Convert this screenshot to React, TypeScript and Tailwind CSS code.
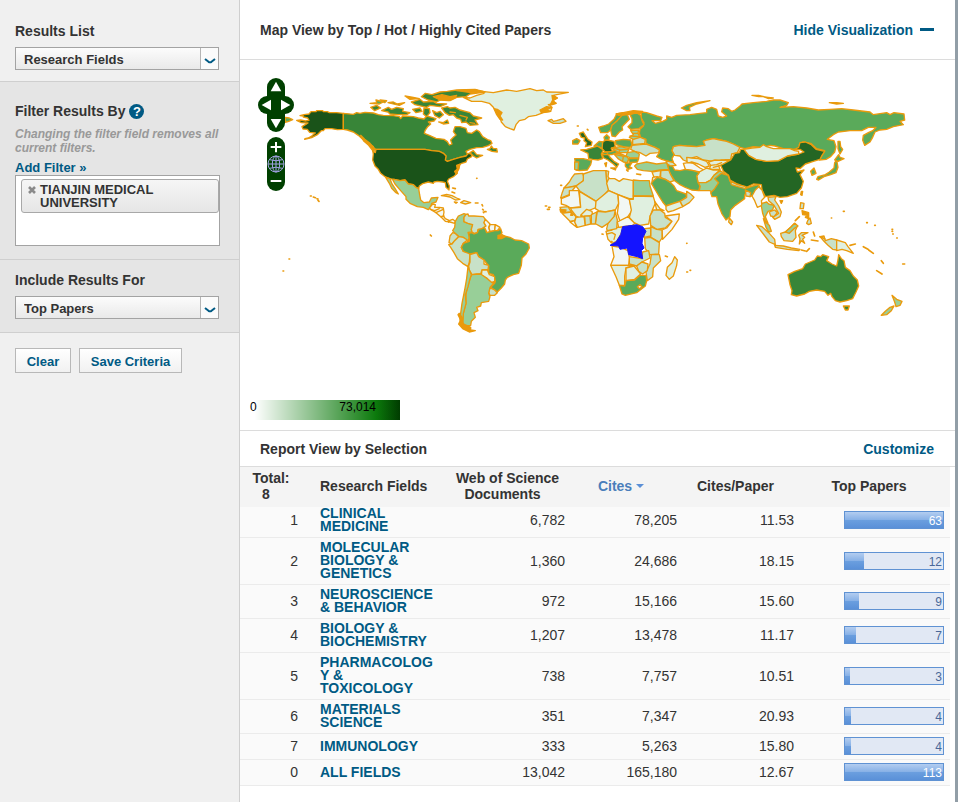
import type { ReactNode } from 'react';

const US = '#1a5319';
const DEEP = '#246624';
const DARK = '#388538';
const MID = '#5aaa5a';
const SOFT = '#98cf98';
const PALE = '#c8e1c8';
const FAINT = '#e0f0e0';
const NONE = '#f2f7f4';
const PICKED = '#1414ff';
const EDGE = '#ea9a0c';

type Shape = [fill: string, d: string];

// each block is drawn from its own origin
const blocks: { x: number; y: number; shapes: Shape[] }[] = [
  // Alaska
  {
    x: 0,
    y: 0,
    shapes: [
      [US, 'M310 160L290 158L268 158L262 155L250 155L248 152L230 152L228 155L213 155L207 162L192 164L180 167L190 168L190 171L203 174L207 181L196 183L182 180L170 181L184 188L204 189L196 194L186 200L189 207L202 208L209 217L226 219L215 228L205 234L195 236L194 238L215 233L232 224L244 212L250 212L255 206L275 206L292 209L310 208Z'],
      [MID, 'M136 172L148 174L158 179L146 184L136 187Z'],
    ],
  },
  // North America, Greenland
  {
    x: 360,
    y: 60,
    shapes: [
      [DARK, 'M-50 100L-20 103L-10 98L0 100L15 97L40 99L55 104L70 106L100 107L118 110L122 116L128 108L160 110L175 114L192 117L200 108L215 112L228 116L222 123L205 126L212 132L203 140L195 152L193 160L208 166L228 175L252 178L262 185L268 195L276 192L272 180L280 172L288 165L280 155L285 140L300 140L318 145L322 158L335 160L350 150L358 155L368 170L385 180L392 182L396 190L385 197L368 202L350 203L330 208L318 214L322 222L330 220L318 228L300 232L280 238L262 244L256 240L258 228L250 220L238 214L215 212L195 208L48 208L42 206L40 200L20 188L8 178L-5 166L-20 156L-38 150L-50 148Z'],
      [US, 'M48 208L195 208L215 212L238 214L250 220L258 228L256 240L262 244L280 238L300 232L318 228L325 220L334 222L335 230L322 237L318 246L305 250L297 256L296 266L290 270L292 280L280 290L266 297L262 304L268 318L267 330L258 322L256 308L248 306L232 304L222 306L220 310L205 306L188 311L178 318L176 326L168 322L160 314L145 312L135 300L120 302L102 298L88 296L75 290L62 280L55 268L45 258L38 240L40 222L38 212L46 218Z'],
      [SOFT, 'M98 299L102 298L120 302L135 300L145 312L160 314L168 322L176 326L179 345L182 360L192 368L208 366L214 354L234 352L228 366L215 370L212 382L205 389L190 382L172 380L150 370L138 358L138 350L122 332L105 312Z'],
      [SOFT, 'M77 292L90 296L96 312L105 325L115 342L108 338L95 325L88 310Z'],
      [FAINT, 'M310 52L330 54L350 46L372 40L365 34L400 38L440 30L470 34L510 26L530 32L550 30L560 36L625 37L590 44L580 46L592 54L578 62L588 70L565 74L576 82L572 94L550 98L528 106L505 110L495 118L478 122L468 134L462 150L450 146L436 140L424 126L420 112L410 96L400 82L388 70L365 64L335 64Z'],
      [EDGE, 'M402 86L412 88L426 98L420 108L428 120L420 118L410 104Z'],
      [EDGE, 'M540 90L560 80L575 82L560 90L572 94L544 98Z'],
      [EDGE, 'M576 46L592 54L578 62L588 70L570 76L578 60Z'],
      [PALE, 'M564 122L575 118L580 124L590 122L610 116L618 124L600 130L580 130Z'],
      [DARK, 'M65 92L85 82L95 88L110 82L130 86L128 94L150 98L140 104L112 104L90 102L84 96Z'],
      [DARK, 'M32 82L50 76L62 84L44 92Z'],
      [MID, 'M30 70L50 68L48 60L70 66L58 72Z'],
      [MID, 'M60 60L80 62L74 68Z'],
      [DARK, 'M84 68L100 66L112 72L134 68L118 76Z'],
      [EDGE, 'M135 48L160 52L178 56L150 58Z'],
      [DARK, 'M154 66L180 58L190 66L220 64L230 70L260 72L240 80L210 76L200 82L165 74Z'],
      [DARK, 'M184 50L196 40L216 44L240 36L262 34L290 30L345 28L375 36L330 42L318 50L290 52L270 62L244 58L230 66L204 60Z'],
      [EDGE, 'M220 50L246 44L270 50L290 46L284 54L266 62L240 60ZM290 32L345 30L372 36L334 38Z'],
      [DARK, 'M158 88L180 84L186 94L168 98ZM192 84L208 86L210 98L200 110L190 102Z'],
      [DARK, 'M245 84L262 80L270 84L285 82L300 90L330 98L340 108L365 114L345 120L354 134L330 136L318 126L305 128L302 118L290 114L280 104L268 106L255 98Z'],
      ['none', 'M270 96L286 98M300 106L322 112L318 120M330 128L344 130'],
      [DARK, 'M218 92L230 98L240 94L250 104L238 114L224 106Z'],
      [DARK, 'M236 126L250 128L262 120L266 130L250 132Z'],
      [DARK, 'M382 208L390 206L394 198L400 206L410 206L412 216L396 214Z'],
      [DARK, 'M330 218L340 212L350 224L368 226L350 234L340 228Z'],
      [EDGE, 'M2 166L12 184L26 196L40 214L46 208L30 190L14 178Z'],
      [EDGE, 'M290 256L300 252L296 268L288 282L284 274L292 268Z'],
    ],
  },
  // Central and South America
  {
    x: 480,
    y: 360,
    shapes: [
      [NONE, 'M88 84L98 72L106 74L104 82L118 82L130 84L132 96L130 108L136 116L148 122L158 118L166 124L164 130L150 126L136 124L124 112L108 98L94 90Z'],
      ['none', 'M92 88L104 92L118 86M108 98L130 88M122 110L132 108M146 121L146 127'],
      [FAINT, 'M124 47L140 43L156 47L170 54L180 58L166 60L150 51L135 48Z'],
      [FAINT, 'M182 68L192 62L200 64L212 68L196 72ZM163 66L172 67L168 70Z'],
      [SOFT, 'M166 124L175 108L192 101L198 103L192 112L192 125L204 130L218 134L214 148L216 156L204 157L208 172L204 186L190 172L178 170L165 160L158 152L164 142Z'],
      [PALE, 'M198 103L204 102L206 108L222 108L250 110L256 118L252 128L258 140L244 148L234 148L232 158L222 160L216 156L214 148L218 134L204 130L192 125L192 112Z'],
      [NONE, 'M256 118L270 132L266 142L270 156L260 158L256 148L252 142L258 138L252 128Z'],
      [NONE, 'M270 134L286 134L284 152L270 154L267 143Z'],
      [NONE, 'M286 134L300 142L292 152L284 152Z'],
      [PALE, 'M158 158L165 160L176 170L164 182L156 192L147 188L150 168Z'],
      [PALE, 'M156 192L164 182L176 170L190 172L202 180L190 190L184 202L190 214L204 216L210 224L208 246L204 260L188 250L172 236L162 218L152 202L146 194Z'],
      [MID, 'M206 160L216 158L222 162L232 158L236 148L246 146L252 142L256 148L260 158L284 152L294 152L302 146L306 158L296 174L312 168L330 172L345 180L365 182L386 192L388 204L378 222L366 234L364 256L356 280L340 284L322 292L316 300L314 312L304 324L292 336L284 330L272 322L284 310L286 304L280 284L266 280L266 258L252 240L236 230L230 218L210 222L190 214L184 202L190 190L208 184L208 172Z'],
      [EDGE, 'M294 166L306 164L316 170L304 176L294 176Z'],
      [PALE, 'M210 224L230 218L236 230L252 240L252 252L266 256L264 268L246 270L242 282L230 282L216 284L208 270L206 258L210 246Z'],
      [FAINT, 'M246 270L262 270L268 284L284 290L284 304L274 308L262 296L244 286Z'],
      [PALE, 'M270 324L284 330L292 338L284 346L270 346L266 338Z'],
      [SOFT, 'M216 284L242 282L262 296L276 308L284 306L270 322L266 340L270 350L266 364L244 368L242 378L230 382L234 392L222 398L226 412L214 424L212 436L196 438L188 428L190 400L198 370L198 340L206 310L212 290Z'],
      [SOFT, 'M204 260L208 270L214 284L210 296L204 320L196 345L198 370L190 400L188 428L194 440L186 436L180 420L182 400L186 370L194 330L200 295Z'],
      [EDGE, 'M178 400L186 412L188 432L200 436L212 442L212 450L226 452L208 456L188 446L176 432L182 420L174 404Z'],
    ],
  },
  // Europe, Russia, Middle East
  {
    x: 900,
    y: 60,
    shapes: [
      [MID, 'M304 96L320 98L350 108L366 112L362 122L336 122L346 130L368 124L380 118L380 108L395 112L410 106L450 104L480 100L500 98L500 88L515 82L530 88L535 108L548 112L560 108L545 95L548 84L565 86L575 94L585 90L600 78L606 72L640 68L680 64L700 60L720 60L745 68L740 76L720 82L760 80L800 84L835 90L870 88L905 86L940 90L990 96L1000 104L1040 98L1050 104L1062 98L1092 102L1094 120L1080 124L1090 134L1060 140L1040 148L1020 150L1005 156L998 172L990 186L974 196L968 180L970 166L985 158L998 152L1008 142L985 142L965 152L930 152L895 156L880 164L862 178L882 182L888 200L884 216L872 230L858 238L838 240L845 226L854 212L830 206L812 190L788 186L778 194L782 204L768 208L730 206L705 198L690 196L668 202L640 200L615 206L600 202L580 192L560 184L540 180L520 176L500 180L490 184L495 196L470 200L440 198L418 196L400 200L396 212L402 224L396 236L400 246L385 244L365 238L350 230L358 218L358 208L345 202L335 198L318 190L318 178L302 172L298 160L300 148L310 138L312 128L304 115Z'],
      [PALE, 'M396 212L400 200L418 196L440 198L470 200L495 196L490 184L500 180L520 176L540 180L560 184L580 192L600 202L592 218L575 222L572 238L545 240L525 246L505 242L490 240L470 230L455 234L440 244L430 240L420 228L404 226Z'],
      [FAINT, 'M440 232L455 234L475 236L500 244L508 258L495 262L475 252L455 246L442 250Z'],
      [NONE, 'M430 250L445 248L460 250L480 264L492 270L478 276L460 272L436 268Z'],
      [FAINT, 'M505 246L525 240L568 242L550 254L536 258L540 268L508 268L512 256Z'],
      ['none', 'M512 256L530 254L545 248M520 262L536 258'],
      [FAINT, 'M478 276L500 264L520 270L540 270L522 286L512 300L498 308L474 308L470 288Z'],
      [SOFT, 'M474 308L498 308L512 300L522 286L540 272L556 282L544 294L540 308L528 322L530 334L518 338L510 332L478 332L480 320Z'],
      [MID, 'M382 252L396 256L404 270L420 272L436 268L460 272L478 278L470 288L474 308L480 318L476 332L455 330L436 322L420 314L404 302L392 284L386 270Z'],
      [SOFT, 'M290 252L300 250L320 246L350 252L380 248L386 268L360 270L335 274L310 272L292 268L284 258Z'],
      [PALE, 'M378 242L400 248L408 256L392 258L382 252Z'],
      [PALE, 'M362 272L386 270L392 284L402 302L390 306L376 298L362 292Z'],
      [FAINT, 'M336 276L362 272L360 290L342 292Z'],
      [FAINT, 'M338 292L352 290L348 304L336 306Z'],
      [MID, 'M340 302L352 292L376 298L392 308L402 318L410 332L438 342L440 352L420 364L395 372L378 378L368 366L358 350L346 330L334 310Z'],
      [PALE, 'M440 334L452 342L462 352L448 368L428 380L420 364L440 352Z'],
      [FAINT, 'M378 378L395 372L420 364L428 380L400 392L384 396L378 388Z'],
      [PALE, 'M276 196L300 194L318 192L345 202L358 210L356 218L330 220L318 228L300 218L284 214L272 208Z'],
      [PALE, 'M278 178L296 170L316 178L314 190L278 194Z'],
      [SOFT, 'M272 152L296 150L294 160L300 172L280 178L268 172L280 164Z'],
      ['none', 'M278 160L294 160M270 168L296 170'],
      [MID, 'M226 182L250 178L272 180L276 196L270 202L250 200L228 194Z'],
      [DEEP, 'M190 184L200 180L222 184L226 200L214 206L218 216L196 216L186 206L184 192Z'],
      [MID, 'M162 198L178 184L188 186L186 206L176 200Z'],
      [DARK, 'M122 210L140 208L160 202L172 198L190 210L184 222L188 236L174 240L158 238L146 236L144 220Z'],
      [MID, 'M104 236L130 236L155 242L152 254L142 270L118 272L108 270L106 248Z'],
      [SOFT, 'M104 246L116 246L114 270L104 268Z'],
      [DEEP, 'M136 200L140 188L132 182L134 174L124 172L118 160L130 156L136 166L144 178L156 186L154 196Z'],
      [MID, 'M98 192L98 182L110 176L120 182L114 192Z'],
      [DARK, 'M186 224L204 222L210 232L222 244L236 252L230 262L220 252L204 240L192 234Z'],
      [DARK, 'M212 264L228 264L226 270ZM194 250L200 248L198 260Z'],
      [MID, 'M188 218L218 214L228 208L236 216L216 224L190 224Z'],
      [SOFT, 'M214 204L240 200L268 206L262 218L236 218Z'],
      ['none', 'M240 210L264 208M222 204L240 210L236 218M200 216L204 224'],
      [SOFT, 'M262 218L284 214L298 222L296 234L272 234L258 228Z'],
      [SOFT, 'M222 222L240 220L258 228L266 236L262 248L250 246L234 236Z'],
      ['none', 'M240 222L250 230L248 242M226 224L256 230'],
      [MID, 'M266 236L296 236L292 246L268 248Z'],
      [MID, 'M256 250L276 248L268 260L276 264L264 268L256 258Z'],
      [MID, 'M176 142L190 138L206 132L222 118L230 102L250 98L262 102L280 94L304 96L298 102L270 102L246 108L232 122L216 136L212 150L202 158L182 158Z'],
      [MID, 'M216 136L232 122L246 106L262 104L268 118L254 132L246 140L248 150L238 156L226 170L216 168L212 150Z'],
      [MID, 'M270 104L290 98L302 106L306 122L312 134L296 146L272 148L264 140L276 128L276 116Z'],
      [EDGE, 'M228 102L250 98L280 92L308 94L300 100L270 100L236 106Z'],
      [MID, 'M192 172L200 164L208 172L206 180L194 180Z'],
      [MID, 'M424 84L440 76L470 68L510 62L470 72L448 82L450 92L440 92Z'],
    ],
  },
  // Africa
  {
    x: 900,
    y: 300,
    shapes: [
      [PALE, 'M104 42L128 40L132 52L130 62L108 78L88 82L72 84L88 66L96 52Z'],
      [PALE, 'M130 42L160 32L198 32L200 62L206 90L190 108L168 124L120 94L108 78L130 62Z'],
      [PALE, 'M198 32L206 34L204 50L210 58L200 64Z'],
      [FAINT, 'M206 56L224 56L238 64L250 56L280 62L280 116L268 116L234 104L206 92L200 70Z'],
      [SOFT, 'M280 60L300 62L328 62L330 78L340 108L280 108Z'],
      [PALE, 'M72 84L108 78L98 90L88 104L62 114L66 100Z'],
      [NONE, 'M64 116L88 106L88 92L116 92L122 140L92 144L78 136L64 132Z'],
      [FAINT, 'M118 94L168 124L170 142L150 150L132 160L120 174L108 168L94 150L92 144L122 142Z'],
      [FAINT, 'M168 124L206 92L234 104L236 130L226 150L196 156L176 152L166 146Z'],
      [NONE, 'M234 104L268 118L276 152L262 172L240 184L232 160L236 130Z'],
      [FAINT, 'M280 108L340 110L346 130L338 148L330 170L326 192L300 196L282 188L268 172L274 150L268 118L280 118Z'],
      [FAINT, 'M344 124L360 146L372 152L350 150Z'],
      [PALE, 'M330 168L340 150L360 150L374 160L376 172L396 184L376 204L350 208L332 196Z'],
      [NONE, 'M376 168L418 162L416 178L396 208L368 238L366 210L380 204L396 184Z'],
      [PALE, 'M332 200L350 208L366 210L366 234L358 246L332 232Z'],
      [PALE, 'M314 206L332 204L332 228L312 232Z'],
      [PALE, 'M314 234L332 232L358 248L356 282L330 284L316 266Z'],
      [PALE, 'M358 284L362 302L340 324L338 350L322 362L318 336L330 312L334 284Z'],
      [PALE, 'M268 290L296 294L306 296L308 276L326 272L330 294L306 306L290 318L268 312Z'],
      [PALE, 'M290 318L306 306L324 312L322 332L308 342L296 334Z'],
      [NONE, 'M216 258L242 262L264 272L268 292L266 316L212 316L222 290Z'],
      [FAINT, 'M212 316L282 316L258 324L254 348L254 376L238 376L228 350Z'],
      [FAINT, 'M258 324L282 318L302 342L284 358L258 362Z'],
      [MID, 'M238 376L254 378L258 362L284 360L300 346L318 346L320 362L316 378L290 398L256 406L246 402Z'],
      [NONE, 'M292 380L300 374L306 380L298 386Z'],
      [FAINT, 'M214 248L204 238L198 214L216 210L222 200L232 202L248 200L244 220L230 244L216 250Z'],
      ['none', 'M200 222L216 218L226 224L222 238'],
      [PALE, 'M200 206L204 190L222 168L226 156L232 180L230 206L202 212Z'],
      [PALE, 'M166 190L172 154L196 156L226 150L222 170L204 190L186 202L168 192Z'],
      [NONE, 'M232 186L264 170L284 190L278 196L248 200L236 202Z'],
      [PALE, 'M60 142L84 140L94 156L66 158Z'],
      [FAINT, 'M66 160L94 156L108 170L104 182L90 184L78 172Z'],
      [NONE, 'M90 186L104 182L110 202Z'],
      [FAINT, 'M108 172L132 170L136 196L112 202L104 186Z'],
      [FAINT, 'M122 166L140 148L156 154L158 166L134 170Z'],
      [PALE, 'M134 168L150 168L152 192L136 196Z'],
      [PALE, 'M154 164L170 156L166 192L154 192Z'],
      [EDGE, 'M60 148L78 150L76 156L62 156ZM94 158L98 166L92 166Z'],
      [FAINT, 'M404 290L412 300L410 316L400 348L388 358L378 346L382 322L396 308Z'],
    ],
  },
  // East Asia, India
  {
    x: 1380,
    y: 60,
    shapes: [
      [DEEP, 'M62 256L92 240L104 220L118 218L122 208L132 208L146 226L168 238L200 244L236 242L262 228L296 222L312 216L300 208L280 210L296 202L300 188L316 186L334 194L348 208L374 214L366 226L360 238L340 244L316 252L300 266L288 264L292 276L312 270L300 284L310 304L304 324L290 340L262 350L240 352L222 346L196 350L186 330L184 314L160 312L140 322L112 312L90 300L86 286L70 274Z'],
      [FAINT, 'M132 208L156 204L180 202L190 194L200 200L220 206L250 206L270 206L284 212L296 214L296 222L262 228L236 242L200 244L168 238L146 226Z'],
      [MID, 'M332 274L342 264L348 280L336 286Z'],
      [MID, 'M350 298L354 290L376 284L388 276L402 264L404 248L410 240L414 262L408 278L392 284L372 290L356 300Z'],
      [MID, 'M404 240L416 224L420 232L432 236L414 244Z'],
      [MID, 'M414 184L420 184L422 200L428 208L420 222L414 206Z'],
      [MID, 'M302 344L304 334L308 334L306 346Z'],
      [MID, 'M156 46L176 46L192 50L176 50ZM190 50L204 52L220 54L206 56ZM388 68L410 68L430 70L410 72Z'],
      [MID, 'M44 296L64 280L84 286L90 304L116 316L140 324L158 318L176 314L180 324L164 336L158 346L150 350L140 334L134 346L134 356L106 376L92 390L90 410L78 420L66 402L54 372L50 350L36 350L32 338L44 326L56 308Z'],
      [PALE, 'M92 304L112 314L138 320L136 326L114 320L94 314Z'],
      [PALE, 'M136 330L152 338L150 350L138 348Z'],
      [NONE, 'M156 348L166 330L176 320L186 330L194 352L184 362L186 376L172 382L164 362Z'],
    ],
  },
  // South-East Asia, Oceania
  {
    x: 1380,
    y: 360,
    shapes: [
      [PALE, 'M88 114L98 126L94 134L86 126Z'],
      [SOFT, 'M186 70L200 66L206 72L222 76L218 90L204 94L196 110L204 130L196 124L188 100L184 78Z'],
      [PALE, 'M204 52L228 50L224 60L236 78L244 96L240 110L224 118L218 112L236 100L222 76L206 62Z'],
      [PALE, 'M208 96L224 90L232 98L222 110L212 108Z'],
      [SOFT, 'M190 116L200 130L208 136L214 154L206 156L198 142Z'],
      [PALE, 'M170 136L186 140L206 158L224 178L226 194L208 186L190 162Z'],
      [PALE, 'M224 196L250 198L274 204L300 208L296 212L262 208L226 202Z'],
      [PALE, 'M242 160L256 156L272 142L284 130L292 138L286 152L288 172L278 184L252 182L244 170Z'],
      [SOFT, 'M256 156L272 142L284 130L294 138L282 146L268 160Z'],
      [PALE, 'M296 166L304 158L324 158L306 166L314 172L308 178L314 190L304 182L298 192L300 176Z'],
      [PALE, 'M360 170L372 168L376 182L394 176L410 180L410 210L398 208L384 196L372 184Z'],
      [FAINT, 'M410 180L436 188L444 200L460 220L440 212L426 208L410 212Z'],
      [PALE, 'M300 86L302 68L312 70L310 86Z'],
      [PALE, 'M320 130L324 120L330 114L334 130L326 134Z'],
      [EDGE, 'M306 92L326 98L326 116L316 112L322 106L308 104Z'],
      [DARK, 'M240 62L248 62L244 70Z'],
      [DARK, 'M264 284L284 274L308 266L316 252L330 246L344 240L352 228L362 230L368 224L386 230L380 242L396 252L410 258L414 240L416 224L424 236L432 242L436 262L450 272L460 288L472 300L476 318L468 336L458 356L440 362L420 366L406 362L396 350L392 340L384 346L374 334L350 330L328 334L314 342L290 348L274 344L276 332L270 314Z'],
      [DARK, 'M430 378L448 378L444 390L436 390Z'],
      [SOFT, 'M576 346L590 358L606 364L600 376L588 380L584 366Z'],
      [SOFT, 'M582 378L574 392L560 404L544 406L556 394L570 382Z'],
    ],
  },
];

// islets too small to have a fill, on the full canvas
const islets =
  'M211 408l3 0M220 411l6 2M231 416l3 1M234 421l3 3' +
  'M147 597l2 0M129 633l2 0' +
  'M710 355l1 0M638 384l8 2M636 396l8 3M706 429l8 0M726 434l2 4M728 448l2 2M730 456l1 2M734 455l4 0M571 525l3 3' +
  'M916 438l4 0M926 442l4 0M922 448l6 0M962 376l3 0M1012 198l3 0M1042 208l2 2' +
  'M1276 588l6 2M1340 550l1 0M1340 636l3 0M1350 631l2 0M1086 522l3 1M1114 545l2 0' +
  'M1190 342l12 2M1160 330l4 3' +
  'M1666 482l12 -12M1684 570l12 3M1700 574l8 -8M1720 516l4 12M1714 540l20 3M1740 530l14 6' +
  'M1830 556l16 -4M1870 560l14 8M1886 570l14 10M1924 602l6 8M1910 632l16 10M1988 612l6 0' +
  'M1774 474l1 0M1810 454l3 0M1880 488l2 0M1904 496l2 0M1956 508l2 0M1956 514l2 0M1958 522l2 0M1970 534l2 0';

const congo =
  'M248 200L262 198L278 196L290 194L308 200L318 214L308 234L306 250L312 264L304 272L308 296L292 290L266 284L262 264L240 268L236 258L210 256L228 246L242 224Z';

const rows = [
  { rank: 1, field: 'CLINICAL MEDICINE', docs: '6,782', cites: '78,205', ratio: '11.53', top: 63 },
  { rank: 2, field: 'MOLECULAR BIOLOGY & GENETICS', docs: '1,360', cites: '24,686', ratio: '18.15', top: 12 },
  { rank: 3, field: 'NEUROSCIENCE & BEHAVIOR', docs: '972', cites: '15,166', ratio: '15.60', top: 9 },
  { rank: 4, field: 'BIOLOGY & BIOCHEMISTRY', docs: '1,207', cites: '13,478', ratio: '11.17', top: 7 },
  { rank: 5, field: 'PHARMACOLOGY & TOXICOLOGY', docs: '738', cites: '7,757', ratio: '10.51', top: 3 },
  { rank: 6, field: 'MATERIALS SCIENCE', docs: '351', cites: '7,347', ratio: '20.93', top: 4 },
  { rank: 7, field: 'IMMUNOLOGY', docs: '333', cites: '5,263', ratio: '15.80', top: 4 },
  { rank: 0, field: 'ALL FIELDS', docs: '13,042', cites: '165,180', ratio: '12.67', top: 113 },
];

function WorldMap() {
  return (
    <svg viewBox="0 0 2145 1110" className="block w-full h-auto" role="img" aria-label="World map">
      <g stroke={EDGE} strokeWidth="4" strokeLinejoin="round" strokeLinecap="round">
        {blocks.map((b, i) => (
          <g key={i} transform={`translate(${b.x} ${b.y})`}>
            {b.shapes.map(([fill, d], j) => (
              <path key={j} d={d} fill={fill} />
            ))}
          </g>
        ))}
        <path d={islets} fill="none" strokeWidth="5" />
      </g>
      <path d={congo} transform="translate(900 300)" fill={PICKED} stroke={PICKED} strokeWidth="3" />
    </svg>
  );
}

function MapButton({ label, className = '', children }: { label: string; className?: string; children: ReactNode }) {
  return (
    <button aria-label={label} className={`block w-[18px] h-[18px] bg-[#004000] ${className}`}>
      <svg viewBox="0 0 54 54" className="block w-full h-full" fill="white">
        {children}
      </svg>
    </button>
  );
}

function MapControls() {
  return (
    <div className="top-[18px] left-[18px] absolute flex flex-col items-center">
      <MapButton label="Pan up" className="rounded-t-full">
        <path d="M27 11L43 40H11Z" />
      </MapButton>
      <div className="flex">
        <MapButton label="Pan left" className="rounded-l-full">
          <path d="M11 27L39 11V43Z" />
        </MapButton>
        <MapButton label="Pan right" className="rounded-r-full">
          <path d="M43 27L15 11V43Z" />
        </MapButton>
      </div>
      <MapButton label="Pan down" className="rounded-b-full">
        <path d="M27 43L43 15H11Z" />
      </MapButton>
      <MapButton label="Zoom in" className="mt-[5px] rounded-t-full">
        <path d="M24 15h6v12h13v6H30v13h-6V33H11v-6h13Z" />
      </MapButton>
      <MapButton label="Zoom to world">
        <g fill="none" stroke="#a3a3e6" strokeWidth="3">
          <circle cx="27" cy="27" r="24" />
          <ellipse cx="27" cy="27" rx="11" ry="24" />
          <path d="M27 3v48M3 27h48M8 14q19 7 38 0M8 40q19-7 38 0" />
        </g>
      </MapButton>
      <MapButton label="Zoom out" className="rounded-b-full">
        <path d="M11 21h32v6H11Z" />
      </MapButton>
    </div>
  );
}

function Dropdown({ id, value }: { id: string; value: string }) {
  return (
    <div className="relative mt-[7px] w-[204px] h-[23px]">
      <select
        id={id}
        className="bg-linear-to-b from-[#fcfcfc] to-[#e9e9e9] px-2 pt-[3px] border border-[#a3a3a3] w-full h-full font-bold text-[13px] appearance-none"
      >
        <option>{value}</option>
      </select>
      <span className="top-px right-px absolute flex justify-center items-center bg-[#fbfbfb] border-[#b5b5b5] border-l w-[18px] h-[21px] pointer-events-none">
        <svg viewBox="0 0 12 6" className="mt-1 w-3 h-1.5" fill="none" stroke="#005a84" strokeWidth="2">
          <path d="M1 1L4.5 3.8Q6 4.8 7.5 3.8L11 1" />
        </svg>
      </span>
    </div>
  );
}

function PaperBar({ value }: { value: number }) {
  const percent = Math.min(100, (value / 63) * 100);
  return (
    <div className="relative bg-[#e1e8f4] ml-auto border border-[#5f92d3] w-[100px] h-[18px]">
      <div
        className="bg-[linear-gradient(to_bottom,#b3cdf0_0%,#86b0e6_50%,#6b9fdf_50%,#5a90d8_100%)] h-full"
        style={{ width: `${percent}%` }}
      />
      <span
        className={`absolute inset-y-0 right-px text-xs leading-[18px] ${percent === 100 ? 'text-white' : 'text-[#4a6899]'}`}
      >
        {value}
      </span>
    </div>
  );
}

export default function App() {
  return (
    <div className="flex bg-white border-[#929ea7] border-r-[3px] min-h-screen font-['Liberation_Sans',Arial,sans-serif] text-[#333] text-sm">
      {/* filters */}
      <aside className="bg-[#f0f0f0] border-[#cfcfcf] border-r w-60 shrink-0">
        <section className="px-[15px] pt-[22px] pb-[11px] border-[#cfcfcf] border-b">
          <label htmlFor="results-list" className="block font-bold leading-[18px]">
            Results List
          </label>
          <Dropdown id="results-list" value="Research Fields" />
        </section>

        <section className="bg-[#e5e5e5] px-[15px] pt-5 pb-[13px] border-[#cfcfcf] border-b">
          <div className="flex items-center gap-1">
            <h2 className="font-bold leading-[18px]">Filter Results By</h2>
            <button
              aria-label="Help"
              className="bg-[#005a84] rounded-full w-[15px] h-[15px] font-bold text-white text-[13px] leading-[15px]"
            >
              ?
            </button>
          </div>
          <p className="mt-[7px] font-bold text-[#999] text-xs italic leading-[14px]">
            Changing the filter field removes all current filters.
          </p>
          <a href="#" className="block pt-1 h-5 font-bold text-[#005a84] text-[13px] leading-[18px]">
            Add Filter »
          </a>
          <div className="bg-white pt-[3px] pl-[5px] border border-[#a3a3a3] w-[205px] h-[71px]">
            <div className="flex bg-linear-to-b from-[#f6f6f6] to-[#e6e6e6] py-[3px] pl-1.5 border border-[#a8a8a8] rounded-[3px]">
              <button aria-label="Remove filter" className="flex items-center w-3 h-[13px]">
                <svg viewBox="0 0 8 8" className="w-2 h-2" stroke="#8a8a8a" strokeWidth="2.6">
                  <path d="M1 1l6 6M7 1l-6 6" />
                </svg>
              </button>
              <span className="flex-1 font-bold text-[13px] leading-[13px]">TIANJIN MEDICAL UNIVERSITY</span>
            </div>
          </div>
        </section>

        <section className="bg-[#e5e5e5] px-[15px] pt-[11px] pb-[13px] border-[#cfcfcf] border-b">
          <label htmlFor="include-results" className="block font-bold leading-[18px]">
            Include Results For
          </label>
          <Dropdown id="include-results" value="Top Papers" />
        </section>

        <div className="flex gap-2 px-[15px] pt-[15px]">
          <button className="bg-linear-to-b from-white to-[#f1f1f1] pt-[3px] border border-[#b8b8b8] w-14 h-[25px] font-bold text-[#005a84] text-[13px]">
            Clear
          </button>
          <button className="bg-linear-to-b from-white to-[#f1f1f1] pt-[3px] border border-[#b8b8b8] w-[103px] h-[25px] font-bold text-[#005a84] text-[13px]">
            Save Criteria
          </button>
        </div>
      </aside>

      <main className="flex-1 min-w-0">
        <div className="flex justify-between items-center pr-[21px] pl-5 border-[#dcdcdc] border-b h-[60px] font-bold">
          <h1>Map View by Top / Hot / Highly Cited Papers</h1>
          <button className="flex items-center gap-[7px] text-[#005a84]">
            Hide Visualization
            <span className="bg-[#005a84] w-3.5 h-[3px]" />
          </button>
        </div>

        {/* map */}
        <div className="relative">
          <WorldMap />
          <MapControls />
          <div className="bottom-2.5 left-2.5 absolute flex justify-between bg-[linear-gradient(to_right,#fff_3%,#0c7a0c_84%,#003c00_100%)] pr-6 w-[150px] h-5 text-black text-xs leading-[14px]">
            <span>0</span>
            <span>73,014</span>
          </div>
        </div>

        {/* report */}
        <div className="flex justify-between items-center pr-[21px] pl-5 border-[#dcdcdc] border-t border-b h-[37px] font-bold">
          <h2>Report View by Selection</h2>
          <a href="#" className="text-[#005a84]">
            Customize
          </a>
        </div>
        <div className="pr-[5px]">
          <table className="w-full border-collapse table-fixed">
            <thead>
              <tr className="bg-[#f4f4f4] *:pb-0.5 h-10 leading-4">
                <th className="w-[62px]">
                  Total:
                  <span className="block pr-2.5">8</span>
                </th>
                <th className="pl-[18px] w-[148px] text-left">Research Fields</th>
                <th className="w-[115px]">
                  Web of Science
                  <span className="block pr-2.5">Documents</span>
                </th>
                <th className="w-[112px]">
                  <button className="inline-flex items-center gap-1 text-[#4a7ebb]">
                    Cites
                    <svg viewBox="0 0 8 4" className="w-2 h-1" fill="#5b8fd6">
                      <path d="M0 0h8L4 4Z" />
                    </svg>
                  </button>
                </th>
                <th className="w-[117px]">Cites/Paper</th>
                <th className="pr-1.5 w-[156px]">Top Papers</th>
              </tr>
            </thead>
            <tbody>
              {rows.map((row) => (
                <tr
                  key={row.rank}
                  className="bg-[#fafafa] *:pt-[3px] first:*:pt-0 *:pb-1 border-[#ebebeb] border-b text-right leading-4"
                >
                  <td className="pr-1">{row.rank}</td>
                  <td className="pr-[15px] pl-[18px] text-left leading-[13px]">
                    <a href="#" className="block font-bold text-[#005a84] break-words">
                      {row.field}
                    </a>
                  </td>
                  <td>{row.docs}</td>
                  <td>{row.cites}</td>
                  <td>{row.ratio}</td>
                  <td className="pr-1.5">
                    <PaperBar value={row.top} />
                  </td>
                </tr>
              ))}
            </tbody>
          </table>
        </div>
      </main>
    </div>
  );
}
